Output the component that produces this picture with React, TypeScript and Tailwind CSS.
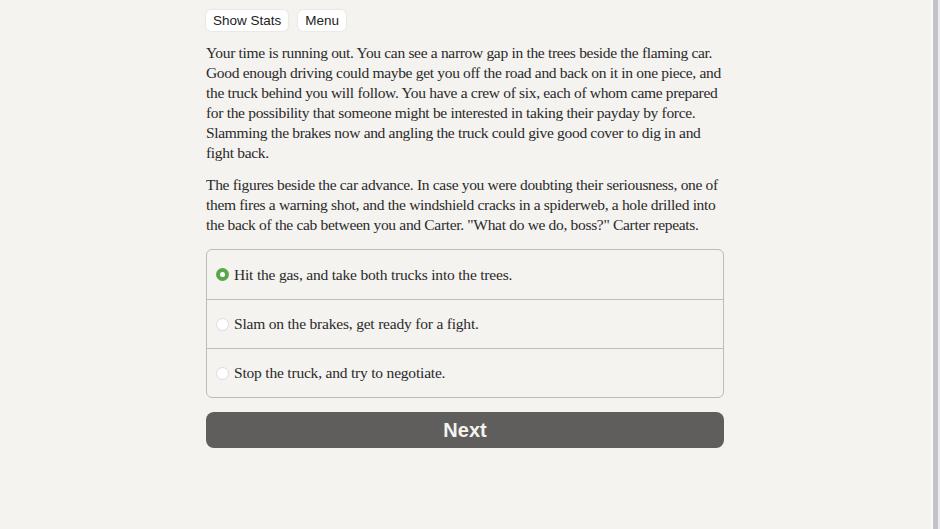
import React from "react";

const p1 = [
  "Your time is running out. You can see a narrow gap in the trees beside the flaming car.",
  "Good enough driving could maybe get you off the road and back on it in one piece, and",
  "the truck behind you will follow. You have a crew of six, each of whom came prepared",
  "for the possibility that someone might be interested in taking their payday by force.",
  "Slamming the brakes now and angling the truck could give good cover to dig in and",
  "fight back.",
];
const p2 = [
  "The figures beside the car advance. In case you were doubting their seriousness, one of",
  "them fires a warning shot, and the windshield cracks in a spiderweb, a hole drilled into",
  "the back of the cab between you and Carter. \"What do we do, boss?\" Carter repeats.",
];
const options = [
  "Hit the gas, and take both trucks into the trees.",
  "Slam on the brakes, get ready for a fight.",
  "Stop the truck, and try to negotiate.",
];

function Lines({ lines }: { lines: string[] }) {
  return (
    <p className="text-[15.5px] leading-[20px] text-[#2a2a2a] tracking-[-0.32px]">
      {lines.map((l, i) => (
        <span key={i} className="block whitespace-nowrap">
          {l}
        </span>
      ))}
    </p>
  );
}

export default function App() {
  return (
    <div className="flex h-[529px] w-[940px] bg-[#f4f3f0]">
      <div className="flex-1">
        <div className="w-[518px] pt-[10px]" style={{ marginLeft: 206 }}>
          <div className="flex gap-[10px] font-['Liberation_Sans',Arial,sans-serif]">
            <button className="h-[21px] rounded-[5px] bg-white px-[7px] text-[13.5px] leading-[21px] text-[#222] shadow-[0_0_2px_rgba(0,0,0,0.15)]">
              Show Stats
            </button>
            <button className="h-[21px] rounded-[5px] bg-white px-[7px] text-[13.5px] leading-[21px] text-[#222] shadow-[0_0_2px_rgba(0,0,0,0.15)]">
              Menu
            </button>
          </div>
          <div className="mt-[12px] flex flex-col gap-[12px] font-['Liberation_Serif','Times_New_Roman',serif]">
            <Lines lines={p1} />
            <Lines lines={p2} />
          </div>
          <div className="mt-[14px] rounded-[6px] border border-[#bdbcbb] font-['Liberation_Serif','Times_New_Roman',serif]">
            {options.map((o, i) => (
              <div
                key={i}
                className={`flex h-[49px] items-center gap-[5px] pl-[9px] ${i > 0 ? "border-t border-[#bdbcbb]" : ""}`}
              >
                {i === 0 ? (
                  <span className="flex h-[13px] w-[13px] items-center justify-center rounded-full bg-[#5aa64a]">
                    <span className="h-[5px] w-[5px] rounded-full bg-white" />
                  </span>
                ) : (
                  <span className="h-[13px] w-[13px] rounded-full border border-[#dcdcdc] bg-white" />
                )}
                <span className="text-[15.5px] tracking-[-0.2px] text-[#2a2a2a]">{o}</span>
              </div>
            ))}
          </div>
          <button className="mt-[14px] flex h-[36px] w-[518px] items-center justify-center rounded-[8px] bg-[#5f5e5c] font-['Liberation_Sans',Arial,sans-serif] text-[20px] font-bold text-[#f4f3f0]">
            Next
          </button>
        </div>
      </div>
      <div className="w-[2px] bg-[#fafaf9]" />
      <div className="w-[5px] bg-[#c3c2c7]" />
      <div className="w-[2px] bg-[#ececef]" />
    </div>
  );
}
